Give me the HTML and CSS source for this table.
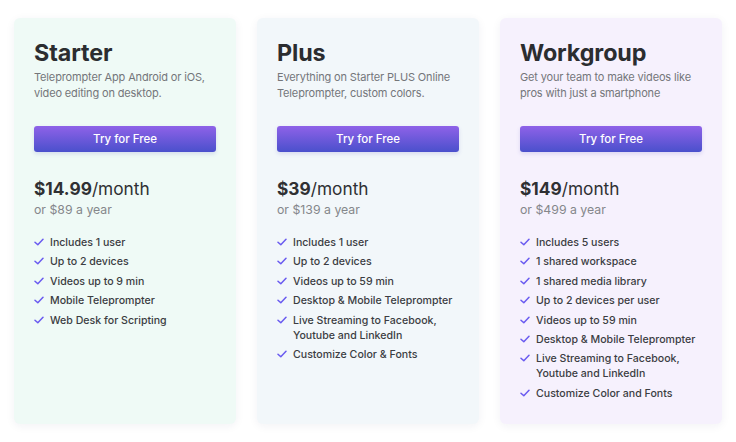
FILE: index.html
```html
<!DOCTYPE html>
<html lang="en">
<head>
    <meta charset="UTF-8">
    <meta name="viewport" content="width=device-width, initial-scale=1.0">
    <title>Pricing</title>
    <link rel="stylesheet" href="styles.css">
</head>
<body>
    <div class="plans">
        <div class="plan plan-starter">
            <h2 class="plan-name">Starter</h2>
            <p class="plan-desc">Teleprompter App Android or iOS, video editing on desktop.</p>
            <button class="try-button">Try for Free</button>
            <div class="price"><strong>$14.99</strong>/month</div>
            <div class="yearly">or $89 a year</div>
            <ul class="features">
                <li><svg class="check" viewBox="0 0 10 8"><path d="M1 4.2l2.8 2.6L9 1.2"/></svg>Includes 1 user</li>
                <li><svg class="check" viewBox="0 0 10 8"><path d="M1 4.2l2.8 2.6L9 1.2"/></svg>Up to 2 devices</li>
                <li><svg class="check" viewBox="0 0 10 8"><path d="M1 4.2l2.8 2.6L9 1.2"/></svg>Videos up to 9 min</li>
                <li><svg class="check" viewBox="0 0 10 8"><path d="M1 4.2l2.8 2.6L9 1.2"/></svg>Mobile Teleprompter</li>
                <li><svg class="check" viewBox="0 0 10 8"><path d="M1 4.2l2.8 2.6L9 1.2"/></svg>Web Desk for Scripting</li>
            </ul>
        </div>

        <div class="plan plan-plus">
            <h2 class="plan-name">Plus</h2>
            <p class="plan-desc">Everything on Starter PLUS Online Teleprompter, custom colors.</p>
            <button class="try-button">Try for Free</button>
            <div class="price"><strong>$39</strong>/month</div>
            <div class="yearly">or $139 a year</div>
            <ul class="features">
                <li><svg class="check" viewBox="0 0 10 8"><path d="M1 4.2l2.8 2.6L9 1.2"/></svg>Includes 1 user</li>
                <li><svg class="check" viewBox="0 0 10 8"><path d="M1 4.2l2.8 2.6L9 1.2"/></svg>Up to 2 devices</li>
                <li><svg class="check" viewBox="0 0 10 8"><path d="M1 4.2l2.8 2.6L9 1.2"/></svg>Videos up to 59 min</li>
                <li><svg class="check" viewBox="0 0 10 8"><path d="M1 4.2l2.8 2.6L9 1.2"/></svg>Desktop &amp; Mobile Teleprompter</li>
                <li><svg class="check" viewBox="0 0 10 8"><path d="M1 4.2l2.8 2.6L9 1.2"/></svg>Live Streaming to Facebook, Youtube and LinkedIn</li>
                <li><svg class="check" viewBox="0 0 10 8"><path d="M1 4.2l2.8 2.6L9 1.2"/></svg>Customize Color &amp; Fonts</li>
            </ul>
        </div>

        <div class="plan plan-workgroup">
            <h2 class="plan-name">Workgroup</h2>
            <p class="plan-desc">Get your team to make videos like pros with just a smartphone</p>
            <button class="try-button">Try for Free</button>
            <div class="price"><strong>$149</strong>/month</div>
            <div class="yearly">or $499 a year</div>
            <ul class="features">
                <li><svg class="check" viewBox="0 0 10 8"><path d="M1 4.2l2.8 2.6L9 1.2"/></svg>Includes 5 users</li>
                <li><svg class="check" viewBox="0 0 10 8"><path d="M1 4.2l2.8 2.6L9 1.2"/></svg>1 shared workspace</li>
                <li><svg class="check" viewBox="0 0 10 8"><path d="M1 4.2l2.8 2.6L9 1.2"/></svg>1 shared media library</li>
                <li><svg class="check" viewBox="0 0 10 8"><path d="M1 4.2l2.8 2.6L9 1.2"/></svg>Up to 2 devices per user</li>
                <li><svg class="check" viewBox="0 0 10 8"><path d="M1 4.2l2.8 2.6L9 1.2"/></svg>Videos up to 59 min</li>
                <li><svg class="check" viewBox="0 0 10 8"><path d="M1 4.2l2.8 2.6L9 1.2"/></svg>Desktop &amp; Mobile Teleprompter</li>
                <li><svg class="check" viewBox="0 0 10 8"><path d="M1 4.2l2.8 2.6L9 1.2"/></svg>Live Streaming to Facebook, Youtube and LinkedIn</li>
                <li><svg class="check" viewBox="0 0 10 8"><path d="M1 4.2l2.8 2.6L9 1.2"/></svg>Customize Color and Fonts</li>
            </ul>
        </div>
    </div>
</body>
</html>
```

FILE: styles.css
```css
* {
    box-sizing: border-box;
}

body {
    margin: 0;
    background: #ffffff;
    font-family: Inter, "Noto Sans", sans-serif;
    color: #2f3033;
}

.plans {
    display: grid;
    grid-template-columns: repeat(3, 222px);
    gap: 21px;
    padding: 18px 15px 18px 14px;
}

.plan {
    border-radius: 6px;
    padding: 21px 20px 19px;
    box-shadow: 0 2px 10px rgba(40, 40, 80, 0.06);
}

.plan-starter {
    background: #effaf6;
}

.plan-plus {
    background: #f2f7fa;
}

.plan-workgroup {
    background: #f6f1fd;
}

.plan-name {
    margin: 0;
    font-size: 23.3px;
    line-height: 28px;
    font-weight: 700;
    color: #2b2d30;
    letter-spacing: -0.1px;
}

.plan-desc {
    margin: 2px 0 0;
    font-size: 11px;
    line-height: 16px;
    letter-spacing: -0.15px;
    color: #74767a;
    min-height: 32px;
}

.try-button {
    display: block;
    width: 100%;
    height: 26px;
    margin-top: 25px;
    border: none;
    border-radius: 3px;
    background: linear-gradient(to bottom, #8f62e8, #4a50cc);
    color: #ffffff;
    font-family: Inter, "Noto Sans", sans-serif;
    font-size: 11.5px;
    font-weight: 500;
    cursor: pointer;
    box-shadow: 0 2px 4px rgba(70, 60, 180, 0.15);
}

.price {
    margin-top: 26px;
    font-size: 17.3px;
    line-height: 22px;
    color: #2f3033;
}

.price strong {
    font-weight: 700;
}

.yearly {
    margin-top: 1px;
    font-size: 12.3px;
    line-height: 18px;
    color: #85878b;
}

.features {
    list-style: none;
    margin: 16px 0 0;
    padding: 0;
}

.features li {
    display: flex;
    align-items: flex-start;
    margin-bottom: 4.4px;
    font-size: 10.6px;
    line-height: 15px;
    font-weight: 500;
    color: #3b3d42;
}

.check {
    flex: none;
    width: 10px;
    height: 8px;
    margin: 3px 6px 0 0;
    fill: none;
    stroke: #6a5bf0;
    stroke-width: 1.5;
    stroke-linecap: round;
    stroke-linejoin: round;
}
```
